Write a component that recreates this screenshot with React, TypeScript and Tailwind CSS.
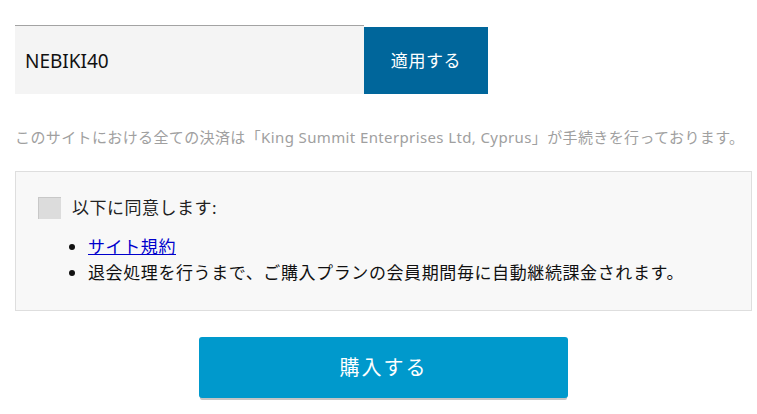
export default function App() {
  return (
    <div
      className="w-[757px] h-[414px] bg-white overflow-hidden pl-[15px] pt-[25px]"
      style={{ fontFamily: '"Noto Sans", "Noto Sans CJK JP", sans-serif' }}
    >
      <div className="flex items-end">
        <div className="w-[349px] h-[69px] bg-[#f4f4f4] border-t border-[#a3a3a3] flex items-center pl-[10px] pt-[2px] text-[19px] text-[#111]">
          NEBIKI40
        </div>
        <button className="w-[124px] h-[67px] bg-[#00669b] text-white text-[17px] tracking-[0.6px] flex items-center justify-center">
          適用する
        </button>
      </div>

      <p className="mt-[32px] text-[15px] leading-[22px] text-[#a0a0a0] tracking-[0.38px] whitespace-nowrap">
        このサイトにおける全ての決済は「King Summit Enterprises Ltd, Cyprus」が手続きを行っております。
      </p>

      <div className="mt-[23px] w-[737px] h-[140px] bg-[#f8f8f8] border border-[#dedede] pl-[22px] pt-[25px]">
        <label className="flex items-center gap-[11px] h-[22px] text-[17px] tracking-[0.5px] text-[#222]">
          <span className="w-[23px] h-[22px] bg-[#dcdcdc] border-l border-t border-[#c8c8c8]" />
          <span>以下に同意します:</span>
        </label>
        <ul className="mt-[15px] list-disc pl-[50px] text-[17px] leading-[26px] tracking-[0.6px] text-[#111]">
          <li>
            <a href="#" className="text-[#0000cc] underline">
              サイト規約
            </a>
          </li>
          <li>退会処理を行うまで、ご購入プランの会員期間毎に自動継続課金されます。</li>
        </ul>
      </div>

      <div className="mt-[26px] pl-[184px]">
        <button className="w-[369px] h-[61px] bg-[#0099cc] rounded-[3px] text-white text-[20px] tracking-[2px] shadow-[0_3px_0_-1px_#c4c4c4] flex items-center justify-center">
          購入する
        </button>
      </div>
    </div>
  );
}
